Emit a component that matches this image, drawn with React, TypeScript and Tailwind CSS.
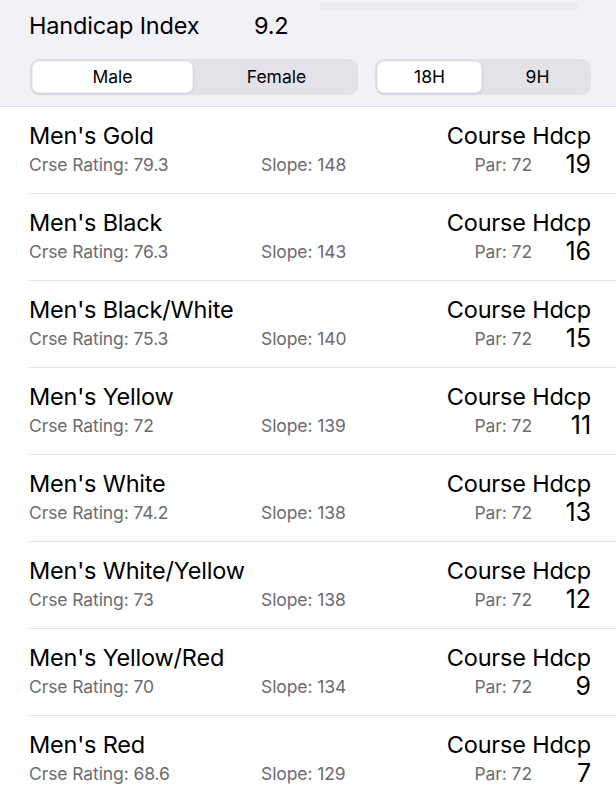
/**
 * Handicap calculator — tee list with course handicap per tee.
 */

import { useState } from "react";

type Tee = {
  name: string;
  rating: string;
  slope: number;
  par: number;
  hdcp: number;
};

const tees: Tee[] = [
  { name: "Men's Gold", rating: "79.3", slope: 148, par: 72, hdcp: 19 },
  { name: "Men's Black", rating: "76.3", slope: 143, par: 72, hdcp: 16 },
  { name: "Men's Black/White", rating: "75.3", slope: 140, par: 72, hdcp: 15 },
  { name: "Men's Yellow", rating: "72", slope: 139, par: 72, hdcp: 11 },
  { name: "Men's White", rating: "74.2", slope: 138, par: 72, hdcp: 13 },
  { name: "Men's White/Yellow", rating: "73", slope: 138, par: 72, hdcp: 12 },
  { name: "Men's Yellow/Red", rating: "70", slope: 134, par: 72, hdcp: 9 },
  { name: "Men's Red", rating: "68.6", slope: 129, par: 72, hdcp: 7 },
];

function Segmented({
  options,
  value,
  onChange,
  className,
}: {
  options: string[];
  value: string;
  onChange: (v: string) => void;
  className: string;
}) {
  return (
    <div className={`flex h-[36px] rounded-[9px] bg-[#e3e2e9] p-[2px] ${className}`}>
      {options.map((opt) => (
        <button
          key={opt}
          onClick={() => onChange(opt)}
          className={`flex-1 rounded-[7px] text-[17.5px] text-black ${
            value === opt
              ? "mr-[4px] bg-white shadow-[0_1px_3px_rgba(0,0,0,0.12)] border border-black/5"
              : ""
          }`}
        >
          {opt}
        </button>
      ))}
    </div>
  );
}

export default function App() {
  const [gender, setGender] = useState("Male");
  const [holes, setHoles] = useState("18H");

  return (
    <main className="min-h-screen w-[616px] bg-white font-['Inter',sans-serif] text-black">
      {/* header */}
      <div className="relative bg-[#f2f1f7] pb-[11px] border-b border-[#e2e1e7]">
        <div className="absolute left-[320px] top-[3px] h-[7px] w-[258px] bg-[#ebeaf1]" />
        <div className="flex h-[52px] items-center pl-[29px] text-[23.5px] tracking-[-0.2px]">
          <span className="w-[225px]">Handicap Index</span>
          <span>9.2</span>
        </div>
        <div className="flex px-[30px] pr-[25px] mt-[7px] gap-[17px]">
          <Segmented
            options={["Male", "Female"]}
            value={gender}
            onChange={setGender}
            className="w-[328px]"
          />
          <Segmented
            options={["18H", "9H"]}
            value={holes}
            onChange={setHoles}
            className="w-[216px]"
          />
        </div>
      </div>

      {/* tee list */}
      <ul className="pl-[29px]">
        {tees.map((t) => (
          <li key={t.name} className="border-b border-[#e4e4e8] pt-[15px] pb-[15px] pr-[25px]">
            <div className="flex h-[28px] items-center justify-between text-[23.5px] tracking-[-0.2px]">
              <span>{t.name}</span>
              <span>Course Hdcp</span>
            </div>
            <div className="mt-[2px] flex h-[26px] items-center text-[17.5px] tracking-[-0.1px] text-[#6c6c70]">
              <span className="w-[232px]">Crse Rating: {t.rating}</span>
              <span className="flex-1">Slope: {t.slope}</span>
              <span>Par: {t.par}</span>
              <span className="w-[59px] text-right text-[25px] text-black">{t.hdcp}</span>
            </div>
          </li>
        ))}
      </ul>
    </main>
  );
}
